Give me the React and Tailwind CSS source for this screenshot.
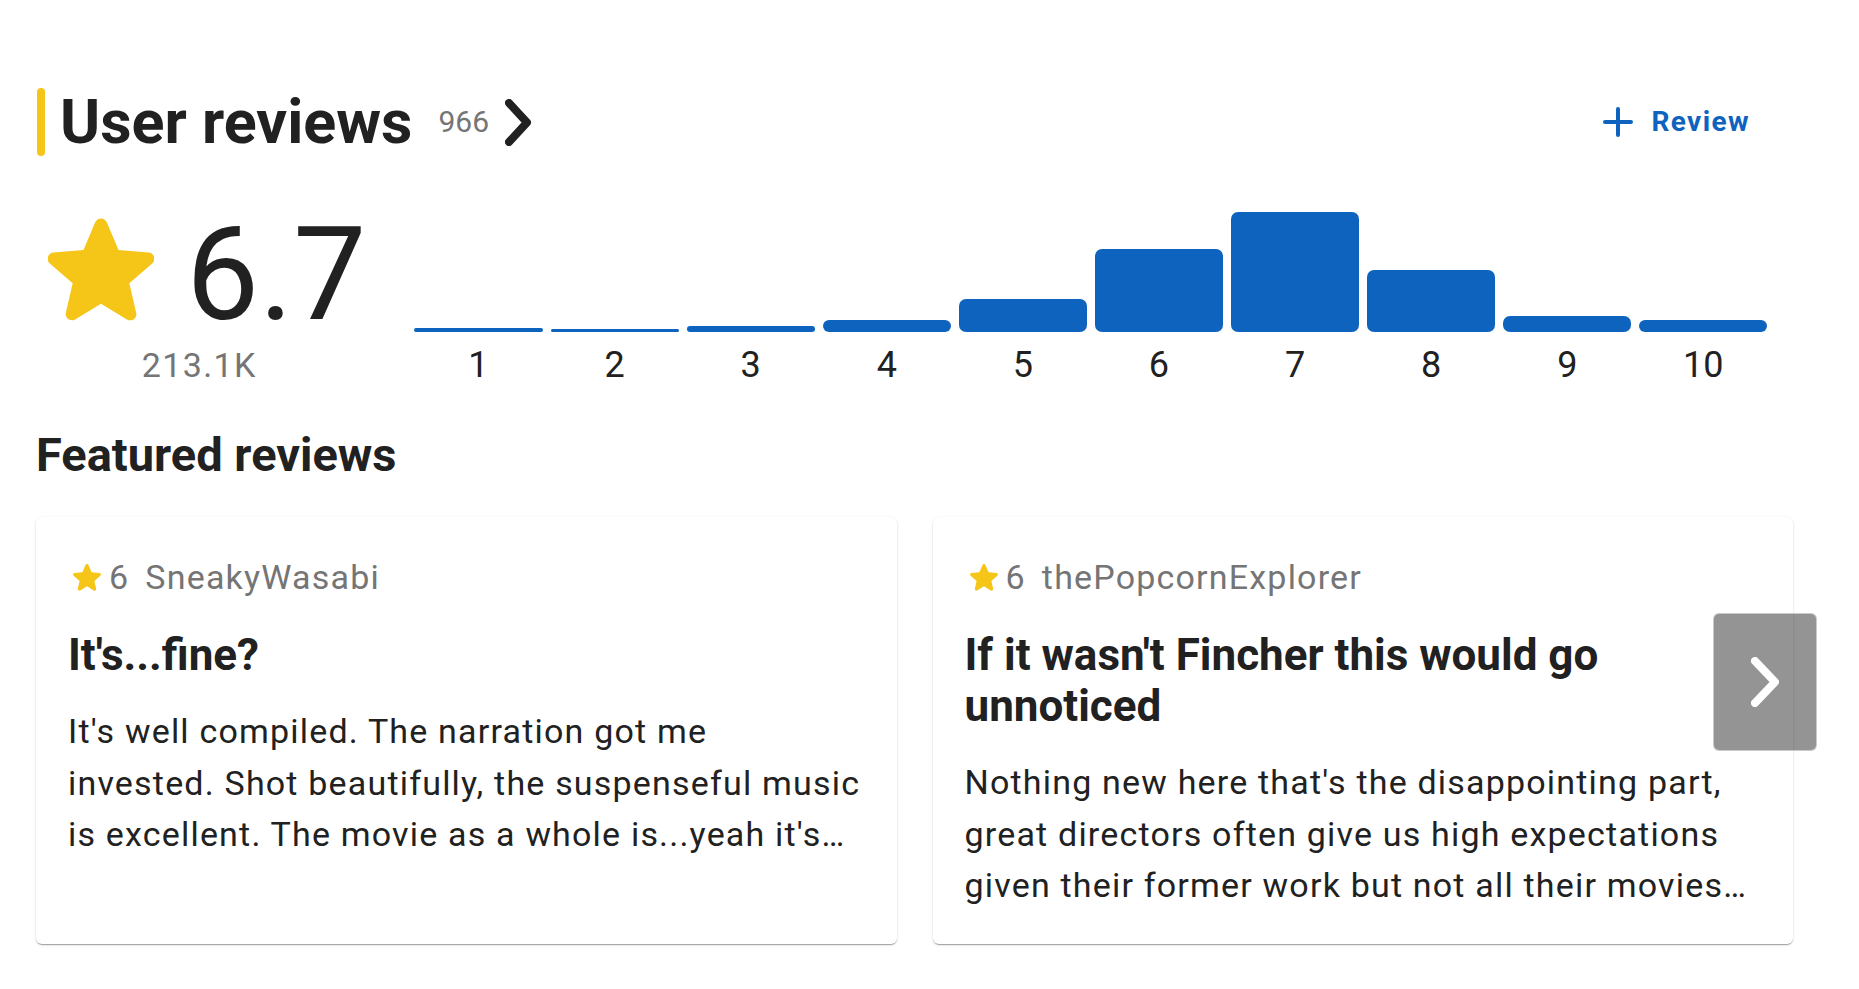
import React from "react";

const STAR =
  "M12 17.27l4.15 2.51c.76.46 1.69-.22 1.49-1.08l-1.1-4.72 3.67-3.18c.67-.58.31-1.68-.57-1.75l-4.83-.41-1.89-4.46c-.34-.81-1.5-.81-1.84 0L9.19 8.63l-4.83.41c-.88.07-1.24 1.17-.57 1.75l3.67 3.18-1.1 4.72c-.2.86.73 1.54 1.49 1.08l4.15-2.5z";

function Star({ className }) {
  return (
    <svg viewBox="3.5 3.55 17 16.6" className={className} aria-hidden="true">
      <path d={STAR} fill="#f5c518" />
    </svg>
  );
}

const bars = [4, 3, 6, 12, 33, 83, 120, 62, 16, 12];

const reviews = [
  {
    rating: 6,
    author: "SneakyWasabi",
    title: ["It's...fine?"],
    body: [
      "It's well compiled. The narration got me",
      "invested. Shot beautifully, the suspenseful music",
      "is excellent. The movie as a whole is...yeah it's…",
    ],
  },
  {
    rating: 6,
    author: "thePopcornExplorer",
    title: ["If it wasn't Fincher this would go", "unnoticed"],
    body: [
      "Nothing new here that's the disappointing part,",
      "great directors often give us high expectations",
      "given their former work but not all their movies…",
    ],
  },
];

function ReviewCard({ r }) {
  return (
    <div className="rounded-[6px] bg-white px-[32px] pt-[40px] pb-[32px] shadow-[0_2px_1px_-1px_rgba(0,0,0,0.2),0_1px_1px_0_rgba(0,0,0,0.14),0_1px_3px_0_rgba(0,0,0,0.12)]">
      <div className="flex h-[40px] items-center text-[34px] leading-[40px] text-[#757575] tracking-[0.035em]">
        <Star className="ml-[5px] h-[27px] w-[28px]" />
        <span className="ml-[8px]">{r.rating}</span>
        <span className="ml-[16px]">{r.author}</span>
      </div>
      <h3 className="mt-[33px] text-[44px] font-bold leading-[51px] text-[#212121]">
        {r.title.map((t, i) => (
          <span key={i} className="block whitespace-nowrap">
            {t}
          </span>
        ))}
      </h3>
      <p className="mt-[25px] text-[34px] leading-[51.5px] text-[#212121] tracking-[0.035em]">
        {r.body.map((t, i) => (
          <span key={i} className="block whitespace-nowrap">
            {t}
          </span>
        ))}
      </p>
    </div>
  );
}

export default function App() {
  return (
    <div className="min-h-screen w-full bg-white font-[Roboto,sans-serif]">
      <div className="pl-[36px] pr-[66px] pt-[88px]">
        {/* Header */}
        <div className="flex h-[68px] items-center justify-between">
          <div className="flex items-center">
            <div className="ml-[1px] h-[68px] w-[8px] rounded-full bg-[#f5c518]" />
            <h2 className="ml-[15px] text-[61px] font-bold leading-none text-[#212121]">
              User reviews
            </h2>
            <span className="ml-[26px] text-[30px] leading-none text-[#757575]">966</span>
            <svg viewBox="0 0 26 47" className="ml-[16px] h-[47px] w-[26px]" aria-hidden="true">
              <polyline
                points="4,4 22,23.5 4,43"
                fill="none"
                stroke="#212121"
                strokeWidth="8"
                strokeLinecap="round"
                strokeLinejoin="round"
              />
            </svg>
          </div>
          <button className="mr-[43px] flex items-center text-[#0e63be]">
            <svg viewBox="0 0 30 30" className="h-[30px] w-[30px]" aria-hidden="true">
              <path d="M15 2v26M2 15h26" stroke="#0e63be" strokeWidth="4" strokeLinecap="round" />
            </svg>
            <span className="ml-[18px] text-[28px] font-bold leading-none tracking-[0.05em]">
              Review
            </span>
          </button>
        </div>

        {/* Rating + histogram */}
        <div className="mt-[55px] flex items-start">
          <div className="ml-[12px] flex flex-col items-center">
            <div className="flex h-[128px] items-center">
              <Star className="mb-[10px] h-[104px] w-[106px]" />
              <span className="ml-[32px] text-[130px] leading-none text-[#212121]">6.7</span>
            </div>
            <span className="mr-[16px] mt-[6px] text-[34px] leading-[40px] tracking-[0.04em] text-[#757575]">
              213.1K
            </span>
          </div>
          <div className="ml-[48px] grid w-[1353px] grid-cols-10 gap-x-[8px]">
            {bars.map((h, i) => (
              <div key={i} className="flex flex-col">
                <div className="flex h-[121px] items-end">
                  <div className="w-full rounded-[7px] bg-[#0e63be]" style={{ height: `${h}px` }} />
                </div>
                <span className="mt-[13px] text-center text-[36px] leading-[40px] text-[#212121]">
                  {i + 1}
                </span>
              </div>
            ))}
          </div>
        </div>

        {/* Featured reviews */}
        <h2 className="mt-[42px] text-[47px] font-bold leading-[56px] text-[#212121]">
          Featured reviews
        </h2>

        <div className="relative mt-[34px]">
          <div className="grid grid-cols-2 gap-x-[36px]">
            {reviews.map((r, i) => (
              <ReviewCard key={i} r={r} />
            ))}
          </div>
          <button className="absolute right-[-24px] top-[96px] flex h-[138px] w-[104px] items-center justify-center rounded-[6px] border border-white/50 bg-[rgba(0,0,0,0.42)]">
            <svg viewBox="0 0 28 50" className="h-[50px] w-[28px]" aria-hidden="true">
              <polyline
                points="4,4 24,25 4,46"
                fill="none"
                stroke="#ffffff"
                strokeWidth="8"
                strokeLinecap="round"
                strokeLinejoin="round"
              />
            </svg>
          </button>
        </div>
      </div>
    </div>
  );
}
